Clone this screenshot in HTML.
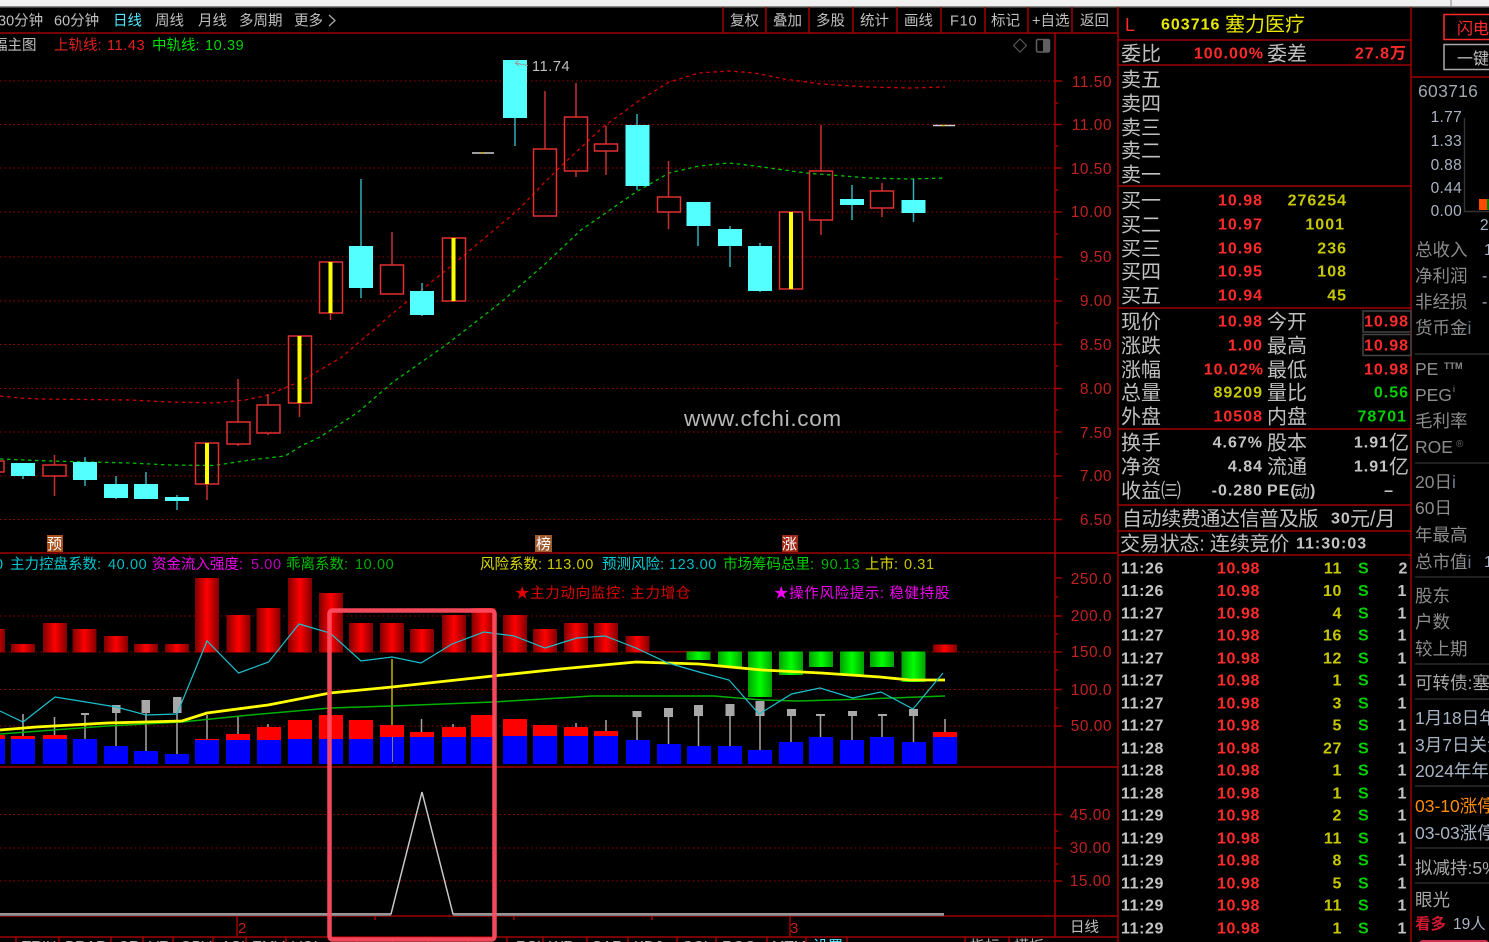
<!DOCTYPE html>
<html lang="zh">
<head>
<meta charset="utf-8">
<title>603716 塞力医疗</title>
<style>
html,body{margin:0;padding:0;background:#000;width:1489px;height:942px;overflow:hidden}
svg{display:block;font-family:"Liberation Sans","Noto Sans CJK SC",sans-serif;filter:blur(.3px)}
text{white-space:pre}
.t{font-size:14.5px;fill:#c0c0c0}
.n{font-size:14.5px;letter-spacing:.6px}
.ax{font-size:15.5px;fill:#c02222;text-anchor:end;letter-spacing:.5px}
.l{font-size:20px;fill:#c0c0c0;transform:translateY(.7px)}
.b{font-size:16px;font-weight:bold;letter-spacing:1px;transform:translateY(-.7px)}
.tk{letter-spacing:.6px}
.e{text-anchor:end}
.r{fill:#ff2a2a}.y{fill:#c8c800}.gr{fill:#00d000}.w{fill:#c4c4c4}
.s{font-size:17.5px;fill:#8c8c8c;transform:translateY(.8px)}
.v{fill:#a8b4c4}
.d{stroke:#a00000;stroke-width:1;stroke-dasharray:1.5 3;fill:none}
.ln{stroke:#a00000;stroke-width:1.5;fill:none}
.sep{stroke:#2c2c2c;stroke-width:1.5;fill:none}
</style>
</head>
<body>
<svg width="1489" height="942" viewBox="0 0 1489 942" xmlns="http://www.w3.org/2000/svg">
<defs>
<linearGradient id="rg" x1="0" x2="1" y1="0" y2="0"><stop offset="0" stop-color="#800000"/><stop offset=".5" stop-color="#ff0000"/><stop offset="1" stop-color="#800000"/></linearGradient>
<linearGradient id="gg" x1="0" x2="1" y1="0" y2="0"><stop offset="0" stop-color="#00a000"/><stop offset=".5" stop-color="#00ff00"/><stop offset="1" stop-color="#00a000"/></linearGradient>
</defs>
<rect width="1489" height="942" fill="#000"/>
<rect width="1489" height="6" fill="#f0f0f0"/>
<rect y="6" width="1489" height="1.5" fill="#8a8a8a"/>
<rect x="1450" width="2" height="6" fill="#bbb"/>

<!-- grids -->
<path class="d" d="M0 81H1055M0 124.500H1055M0 168H1055M0 212H1055M0 257H1055M0 301H1055M0 344.500H1055M0 388.500H1055M0 432H1055M0 476H1055M0 519.500H1055"/>
<path class="d" d="M0 616H1055M0 652H1055M0 689.500H1055M0 726H1055"/>
<path class="d" d="M0 814.500H1055M0 848H1055M0 881H1055"/>

<!-- structure lines -->
<path class="ln" d="M0 33H1118M0 553H1118M0 767H1118M0 916H1118M0 937H1118"/>
<path class="ln" d="M1055 33V937M1118 7V942M1411 7V942"/>
<path class="ln" stroke-width="1" d="M723 7V33M766 7V33M809 7V33M853 7V33M897 7V33M941 7V33M985 7V33M1028 7V33M1072 7V33"/>
<path class="ln" d="M1118 40H1411M1118 65H1411M1118 186H1411M1118 308H1411M1118 429H1411M1118 505H1411M1118 531H1411M1118 555H1411M1412 77H1489"/>
<path class="ln" d="M1055 81h7M1055 124.500h7M1055 168h7M1055 212h7M1055 257h7M1055 301h7M1055 344.500h7M1055 388.500h7M1055 432h7M1055 476h7M1055 519.500h7M1055 103h3M1055 146h3M1055 190h3M1055 234h3M1055 279h3M1055 323h3M1055 366h3M1055 410h3M1055 454h3M1055 498h3M1055 578h7M1055 616h7M1055 652h7M1055 689.500h7M1055 726h7M1055 597h3M1055 634h3M1055 670h3M1055 708h3M1055 814.500h7M1055 848h7M1055 881h7M1055 831h3M1055 864h3"/>
<path class="ln" stroke-width="1" d="M237 916V937M790 916V937M375 916v4M514 916v4M652 916v4M16 937v5M59 937v5M111 937v5M143 937v5M173 937v5M213 937v5M246 937v5M286 937v5M357 937v5M393 937v5M428 937v5M468 937v5M507 937v5M543 937v5M587 937v5M628 937v5M677 937v5M716 937v5M767 937v5M806 937v5M847 937v5M965 937v5M1009 937v5"/>

<!-- band lines -->
<polyline fill="none" stroke="#d00000" stroke-width="1.300" stroke-dasharray="3.500 3.500" points="0,396 20,398 40,399 130,400 170,402 215,403 245,400 265,396 285,388 303,380 320,370 342,357 357,344 371,332 393,313 403,305 450,267 518,210 544,183 560,167 603,127 640,100 669,82 699,73 729,71 755,73 784,79 821,84 869,87 910,88 945,87"/>
<polyline fill="none" stroke="#00c000" stroke-width="1.300" stroke-dasharray="3.500 3.500" points="0,459 50,461 130,463 170,465 214,465.500 250,460 285,456 303,445 320,437 357,413 393,382 446,345 500,303 544,265 581,230 636,192 669,173 699,166 729,163 755,166 806,173 869,178 910,179 945,178"/>

<!-- wicks -->
<path fill="none" stroke="#2fb0b8" stroke-width="1.500" d="M23 463V479M85 457V486M116 476V499M146 472V499M177 495V510M361 179V298M422 283V316M515 60V146M637 114V190M698 226V246M730 226V267M760 243V292M852 185V220M913.500 179V222"/>
<path fill="none" stroke="#c83030" stroke-width="1.500" d="M54.500 455V465M54.500 476V496M207 484V500M238 379V422M238 444V446M268 394V405M268 433V435M299.500 403V417M330.500 313V320M392 232V265M545 91V149M576 83V117M576 171V177M606 126V144M606 151V175M668.500 161V197M668.500 212V229M821 125V171M821 220V235M882 183V191M882 208V217"/>
<!-- red hollow candles -->
<g fill="none" stroke="#e03030" stroke-width="1.500">
<rect x="-5" y="461" width="9" height="11"/><rect x="43" y="465" width="23" height="11"/><rect x="195.500" y="443" width="23" height="41"/><rect x="227" y="422" width="23" height="22"/><rect x="257" y="405" width="23" height="28"/><rect x="288.500" y="336" width="23" height="67"/><rect x="319.500" y="262" width="23" height="51"/><rect x="380.500" y="265" width="23" height="29"/><rect x="442.500" y="238" width="23" height="63"/><rect x="533.500" y="149" width="23" height="67"/><rect x="564.500" y="117" width="23" height="54"/><rect x="594.500" y="144" width="23" height="7"/><rect x="657.500" y="197" width="23" height="15"/><rect x="779.500" y="212" width="23" height="77"/><rect x="809.500" y="171" width="23" height="49"/><rect x="870.500" y="191" width="23" height="17"/>
</g>
<g fill="#ffff00">
<rect x="205" y="443" width="4" height="41"/><rect x="297.500" y="336" width="4" height="67"/><rect x="328.500" y="262" width="4" height="51"/><rect x="451.500" y="238" width="4" height="63"/><rect x="789" y="212" width="4" height="77"/>
</g>
<!-- cyan candles -->
<g fill="#54ffff">
<rect x="11" y="463" width="24" height="13"/><rect x="73" y="462" width="24" height="18"/><rect x="104" y="484" width="24" height="14"/><rect x="134" y="484" width="24" height="15"/><rect x="165" y="497" width="24" height="4"/><rect x="349" y="246" width="24" height="42"/><rect x="410" y="291" width="24" height="24"/><rect x="503" y="60" width="24" height="58"/><rect x="625.500" y="125" width="24" height="61"/><rect x="686.500" y="202" width="24" height="24"/><rect x="718" y="229" width="24" height="17"/><rect x="748" y="246" width="24" height="45"/><rect x="840" y="199" width="24" height="6"/><rect x="901.500" y="200" width="24" height="13"/>
</g>
<!-- doji -->
<path stroke="#cfcfcf" stroke-width="1.500" d="M472 153H494M933 125.500H955"/>
<path stroke="#d0b000" stroke-width="1.500" d="M481 153h3M942 125.500h3"/>
<!-- high marker -->
<path fill="none" stroke="#9a9a9a" stroke-width="1" d="M528 65.500L515 63M515 63l4-2.500M515 63l4 3"/>
<text x="532" y="71" font-size="14.500" fill="#c0c0c0" letter-spacing=".6">11.74</text>

<!-- icons -->
<path fill="none" stroke="#555" stroke-width="1.200" d="M1020 39l6.500 6.500-6.500 6.500-6.500-6.500z"/>
<rect x="1036.500" y="39.500" width="13" height="12.500" rx="1.500" fill="none" stroke="#606060" stroke-width="1.500"/>
<rect x="1043" y="40" width="6" height="11.500" fill="#606060"/>

<!-- marker tags -->
<rect x="47" y="535" width="16" height="17" fill="#a84e18"/><text x="47" y="549" font-size="15" fill="#fff">预</text>
<rect x="535" y="535" width="17" height="17" fill="#a05a30"/><text x="536" y="549" font-size="15" fill="#fff">榜</text>
<rect x="782" y="535" width="16" height="17" fill="#a02818"/><text x="782" y="549" font-size="15" fill="#fff">涨</text>

<!-- watermark -->
<text x="684" y="426" font-size="22.500" fill="#b8b8b8" letter-spacing=".7">www.cfchi.com</text>

<!-- top bar text -->
<text class="t" x="-2" y="25.500">30分钟</text>
<text class="t" x="54" y="25.500">60分钟</text>
<text class="t" x="113" y="25.500" style="fill:#4fe8ff">日线</text>
<text class="t" x="155" y="25.500">周线</text>
<text class="t" x="198" y="25.500">月线</text>
<text class="t" x="239" y="25.500">多周期</text>
<text class="t" x="294" y="25.500">更多</text>
<path fill="none" stroke="#b0b0b0" stroke-width="1.200" d="M329 15l6 5.500-6 5.500"/>
<text class="t" x="730" y="25.500">复权</text>
<text class="t" x="773" y="25.500">叠加</text>
<text class="t" x="816" y="25.500">多股</text>
<text class="t" x="860" y="25.500">统计</text>
<text class="t" x="904" y="25.500">画线</text>
<text class="t" x="950" y="25.500" letter-spacing=".8">F10</text>
<text class="t" x="991" y="25.500">标记</text>
<text class="t" x="1032" y="25.500">+自选</text>
<text class="t" x="1080" y="25.500">返回</text>

<!-- legend main -->
<text class="t" x="-7" y="50">幅主图</text>
<text class="t" x="54" y="50" style="fill:#e02020">上轨线:</text><text class="n" x="107" y="50" fill="#e02020">11.43</text>
<text class="t" x="152" y="50" style="fill:#00e000">中轨线:</text><text class="n" x="205" y="50" fill="#00d000">10.39</text>

<!-- axis 1 -->
<text class="ax" x="1112" y="87">11.50</text><text class="ax" x="1112" y="130">11.00</text><text class="ax" x="1112" y="174">10.50</text><text class="ax" x="1112" y="217">10.00</text><text class="ax" x="1112" y="262">9.50</text><text class="ax" x="1112" y="306">9.00</text><text class="ax" x="1112" y="350">8.50</text><text class="ax" x="1112" y="394">8.00</text><text class="ax" x="1112" y="438">7.50</text><text class="ax" x="1112" y="481">7.00</text><text class="ax" x="1112" y="525">6.50</text>
<text class="ax" x="1112" y="584">250.0</text><text class="ax" x="1112" y="621">200.0</text><text class="ax" x="1112" y="657">150.0</text><text class="ax" x="1112" y="695">100.0</text><text class="ax" x="1112" y="731">50.00</text>
<text class="ax" x="1111" y="820">45.00</text><text class="ax" x="1111" y="853">30.00</text><text class="ax" x="1111" y="886">15.00</text>

<!-- panel2 legend -->
<text class="t" x="-5" y="569" style="fill:#00c8c8">0</text>
<text class="t" x="10" y="569" style="fill:#00c8d0">主力控盘系数:</text><text class="n" x="108" y="569" fill="#00b8c0">40.00</text>
<text class="t" x="152" y="569" style="fill:#f000f0">资金流入强度:</text><text class="n" x="251" y="569" fill="#c000c0">5.00</text>
<text class="t" x="286" y="569" style="fill:#00c000">乖离系数:</text><text class="n" x="355" y="569" fill="#00a800">10.00</text>
<text class="t" x="480" y="569" style="fill:#d8d800">风险系数:</text><text class="n" x="547" y="569" fill="#c8c800">113.00</text>
<text class="t" x="602" y="569" style="fill:#00d0d8">预测风险:</text><text class="n" x="669" y="569" fill="#00b8c0">123.00</text>
<text class="t" x="723" y="569" style="fill:#00d000">市场筹码总里:</text><text class="n" x="821" y="569" fill="#00b000">90.13</text>
<text class="t" x="865" y="569" style="fill:#d8d800">上市:</text><text class="n" x="904" y="569" fill="#c8c800">0.31</text>
<text class="t" x="515" y="598" style="fill:#e00000" letter-spacing=".65">★主力动向监控: 主力增仓</text>
<text class="t" x="774" y="598" style="fill:#f000f0" letter-spacing=".65">★操作风险提示: 稳健持股</text>

<!-- red momentum bars -->
<g fill="url(#rg)">
<rect x="-19" y="629" width="24" height="23.500"/><rect x="11" y="644" width="24" height="8.500"/><rect x="43" y="623" width="24" height="29.500"/><rect x="72.500" y="629" width="24" height="23.500"/><rect x="104" y="636" width="24" height="16.500"/><rect x="134" y="644" width="24" height="8.500"/><rect x="165" y="644" width="24" height="8.500"/><rect x="195" y="578" width="24" height="74.500"/><rect x="226.500" y="615" width="24" height="37.500"/><rect x="256.500" y="608" width="24" height="44.500"/><rect x="288" y="578" width="24" height="74.500"/><rect x="319" y="593" width="24" height="59.500"/><rect x="349" y="623" width="24" height="29.500"/><rect x="380" y="623" width="24" height="29.500"/><rect x="410" y="629" width="24" height="23.500"/><rect x="442" y="615" width="24" height="37.500"/><rect x="471.500" y="608" width="24" height="44.500"/><rect x="503" y="615" width="24" height="37.500"/><rect x="533" y="629" width="24" height="23.500"/><rect x="564" y="623" width="24" height="29.500"/><rect x="594" y="623" width="24" height="29.500"/><rect x="625.500" y="636" width="24" height="16.500"/><rect x="933" y="644.500" width="24" height="8"/>
</g>
<rect x="650" y="651" width="48" height="1.500" fill="#900"/>
<g fill="url(#gg)">
<rect x="686.500" y="651.500" width="24" height="8.500"/><rect x="718" y="651.500" width="24" height="15.500"/><rect x="748" y="651.500" width="24" height="45.500"/><rect x="779" y="651.500" width="24" height="23.500"/><rect x="809" y="651.500" width="24" height="15.500"/><rect x="840" y="651.500" width="24" height="23.500"/><rect x="870" y="651.500" width="24" height="15.500"/><rect x="901.500" y="651.500" width="24" height="30.500"/>
</g>

<!-- gray wicks and caps -->
<path fill="none" stroke="#a8a8a8" stroke-width="1.500" d="M23 714V736M54.500 717V735M85 714V739M116 705V746M146 700V751M177 697V754M207 715V739M238 717V734M268 724V727M421.500 719V732M453 724V727M576 723V727M606 720V731M637 711V740M668.500 708V744M698.500 705V746M730 704V746M760 701V750M791 709V742M820.500 714V737M852 711V740M882 714V737M913.500 709V742M945 719V732M392 725V762"/>
<path stroke="#c8b000" stroke-width="1.500" d="M392 659V725"/>
<g fill="#a8a8a8">
<rect x="81" y="713" width="8" height="2"/><rect x="112" y="705" width="8.500" height="8"/><rect x="141.500" y="700" width="8.500" height="13"/><rect x="173" y="697" width="8.500" height="16"/><rect x="632.500" y="711" width="9" height="6"/><rect x="664" y="708" width="9" height="9"/><rect x="694" y="705" width="9" height="11"/><rect x="725.500" y="704" width="9" height="12"/><rect x="755.500" y="701" width="9" height="15"/><rect x="787" y="709" width="9" height="7"/><rect x="816" y="714" width="9" height="2"/><rect x="848" y="711" width="9" height="5"/><rect x="878" y="714" width="9" height="2"/><rect x="909" y="709" width="9" height="7"/>
</g>
<!-- blue volume -->
<path fill="#0000ff" d="M-19 739h24v25h-24zM11 739h24v25h-24zM43 739h24v25h-24zM73 739h24v25h-24zM104 746h24v18h-24zM134 751h24v13h-24zM165 754h24v10h-24zM195 740h24v24h-24zM226 740h24v24h-24zM257 740h24v24h-24zM288 739h24v25h-24zM319 739h24v25h-24zM349 739h24v25h-24zM380 737h12v27h-12zM393 737h11v27h-11zM410 737h24v27h-24zM442 737h24v27h-24zM471 737h24v27h-24zM503 736h24v28h-24zM533 736h24v28h-24zM564 736h24v28h-24zM594 736h24v28h-24zM626 740h24v24h-24zM657 744h24v20h-24zM687 746h24v18h-24zM718 746h24v18h-24zM748 750h24v14h-24zM779 742h24v22h-24zM809 737h24v27h-24zM840 740h24v24h-24zM870 737h24v27h-24zM902 742h24v22h-24zM933 737h24v27h-24z"/>
<path fill="#ff0000" d="M-19 735h24v4h-24zM11 736h24v3h-24zM43 735h24v4h-24zM195 739h24v1h-24zM226 734h24v6h-24zM257 727h24v13h-24zM288 720h24v19h-24zM319 715h24v24h-24zM349 720h24v19h-24zM380 725h24v12h-24zM410 732h24v5h-24zM442 727h24v10h-24zM471 715h24v22h-24zM503 719h24v17h-24zM533 725h24v11h-24zM564 727h24v9h-24zM594 731h24v5h-24zM933 732h24v5h-24z"/>

<!-- indicator lines -->
<polyline fill="none" stroke="#00b000" stroke-width="1.500" points="0,734 107,726 182,722 250,715 330,708 392,706 493,702 560,698 592,696 714,696 762,700 799,701 865,699 945,696"/>
<polyline fill="none" stroke="#ffff00" stroke-width="2.800" points="0,730 36,727 107,723 182,721 207,713 268,705 330,693 392,687 493,676 560,669 636,662 699,664 762,670 821,673 880,677 910,680 945,680"/>
<polyline fill="none" stroke="#1cc0cc" stroke-width="1.200" points="0,711 23,722 55,697 86,702 116,707 146,715 177,714 207,641 238.600,673 268.600,662 299,624 330,633 361,661 392,657 421,663 452,644 484,632 514,636 545,648 577,638 605,636 636,648 668,663 699,672 729,680 759,714 791.600,694 820,688 852.600,698 881,692 913,709 943,673"/>

<!-- panel 3 -->
<path fill="none" stroke="#c8c8c8" stroke-width="1.500" d="M0 914H391L422 792 453 914H944"/>
<path fill="none" stroke="#777" stroke-width="1" d="M0 915.500H391M453 915.500H944"/>
<text x="238" y="933" font-size="15" fill="#c02020">2</text>
<text x="790" y="933" font-size="15" fill="#c02020">3</text>
<text class="t" x="1070" y="932">日线</text>

<!-- bottom cut-off tabs -->
<g font-size="15" fill="#b0b0b0">
<text x="22" y="951">TRIX</text><text x="65" y="951">BRAR</text><text x="118" y="951">CR</text><text x="149" y="951">VR</text><text x="180" y="951">OBV</text><text x="221" y="951">ASI</text><text x="252" y="951">EMV</text><text x="292" y="951">VOL</text><text x="516" y="951">RSI</text><text x="549" y="951">WR</text><text x="592" y="951">SAR</text><text x="634" y="951">KDJ</text><text x="682" y="951">CCI</text><text x="722" y="951">ROC</text><text x="772" y="951">MTM</text><text x="813" y="951" fill="#4fe8ff">设置</text><text x="970" y="951">指标</text><text x="1014" y="951">模板</text>
</g>

<!-- pink highlight -->
<rect x="329.500" y="610.500" width="165" height="329" rx="3" fill="none" stroke="#ff4c60" stroke-width="4.500" opacity=".95"/>

<!-- quote panel -->
<text x="1125" y="31" font-size="18" fill="#ff2a2a">L</text>
<text class="b" x="1161" y="30" fill="#e8e800" letter-spacing="1.100">603716</text>
<text x="1225" y="31" font-size="20" fill="#e8e800">塞力医疗</text>
<text class="l" x="1121" y="60">委比</text><text class="b e r" x="1264" y="59">100.00%</text><text class="l" x="1267" y="60">委差</text><text class="b e r" x="1407" y="59">27.8万</text>
<text class="l" x="1121" y="86">卖五</text><text class="l" x="1121" y="110">卖四</text><text class="l" x="1121" y="134">卖三</text><text class="l" x="1121" y="157">卖二</text><text class="l" x="1121" y="181">卖一</text>
<text class="l" x="1121" y="207">买一</text><text class="b e r" x="1263" y="206">10.98</text><text class="b e y" x="1347" y="206">276254</text>
<text class="l" x="1121" y="231">买二</text><text class="b e r" x="1263" y="230">10.97</text><text class="b e y" x="1345" y="230">1001</text>
<text class="l" x="1121" y="255">买三</text><text class="b e r" x="1263" y="254">10.96</text><text class="b e y" x="1347" y="254">236</text>
<text class="l" x="1121" y="278">买四</text><text class="b e r" x="1263" y="277">10.95</text><text class="b e y" x="1347" y="277">108</text>
<text class="l" x="1121" y="302">买五</text><text class="b e r" x="1263" y="301">10.94</text><text class="b e y" x="1347" y="301">45</text>

<rect x="1363" y="311" width="48" height="21" fill="none" stroke="#444" stroke-width="1.500"/>
<rect x="1363" y="334.500" width="48" height="21" fill="none" stroke="#444" stroke-width="1.500"/>
<text class="l" x="1121" y="328">现价</text><text class="b e r" x="1263" y="327">10.98</text><text class="l" x="1267" y="328">今开</text><text class="b e r" x="1409" y="327">10.98</text>
<text class="l" x="1121" y="352">涨跌</text><text class="b e r" x="1263" y="351">1.00</text><text class="l" x="1267" y="352">最高</text><text class="b e r" x="1409" y="351">10.98</text>
<text class="l" x="1121" y="376">涨幅</text><text class="b e r" x="1264" y="375">10.02%</text><text class="l" x="1267" y="376">最低</text><text class="b e r" x="1409" y="375">10.98</text>
<text class="l" x="1121" y="399">总量</text><text class="b e y" x="1263" y="398">89209</text><text class="l" x="1267" y="399">量比</text><text class="b e gr" x="1409" y="398">0.56</text>
<text class="l" x="1121" y="423">外盘</text><text class="b e r" x="1263" y="422">10508</text><text class="l" x="1267" y="423">内盘</text><text class="b e gr" x="1407" y="422">78701</text>

<text class="l" x="1121" y="449">换手</text><text class="b e w" x="1263" y="448">4.67%</text><text class="l" x="1267" y="449">股本</text><text class="b e w" x="1389" y="448">1.91</text><text class="l" x="1389" y="449">亿</text>
<text class="l" x="1121" y="473">净资</text><text class="b e w" x="1263" y="472">4.84</text><text class="l" x="1267" y="473">流通</text><text class="b e w" x="1389" y="472">1.91</text><text class="l" x="1389" y="473">亿</text>
<text class="l" x="1121" y="497">收益㈢</text><text class="b e w" x="1263" y="496">-0.280</text><text class="b w" x="1267" y="496">PE(</text><text x="1294" y="497" font-size="16" fill="#c0c0c0">动</text><text class="b w" x="1310" y="496">)</text><text class="b e w" x="1394" y="496">–</text>
<text class="l" x="1122" y="525" letter-spacing="-.4">自动续费通达信普及版</text><text class="b w" x="1331" y="524">30</text><text class="l" x="1350" y="525">元/月</text>
<text class="l" x="1120" y="550" letter-spacing="-.2">交易状态: 连续竞价</text><text class="b w" x="1296" y="549">11:30:03</text>

<!-- ticks -->
<g class="b tk">
<text class="w" x="1121" y="574">11:26</text><text class="e r" x="1260" y="574">10.98</text><text class="e y" x="1342" y="574">11</text><text class="gr" x="1358" y="574">S</text><text class="e w" x="1408" y="574">2</text>
<text class="w" x="1121" y="596.500">11:26</text><text class="e r" x="1260" y="596.500">10.98</text><text class="e y" x="1342" y="596.500">10</text><text class="gr" x="1358" y="596.500">S</text><text class="e w" x="1407" y="596.500">1</text>
<text class="w" x="1121" y="619">11:27</text><text class="e r" x="1260" y="619">10.98</text><text class="e y" x="1342" y="619">4</text><text class="gr" x="1358" y="619">S</text><text class="e w" x="1407" y="619">1</text>
<text class="w" x="1121" y="641">11:27</text><text class="e r" x="1260" y="641">10.98</text><text class="e y" x="1342" y="641">16</text><text class="gr" x="1358" y="641">S</text><text class="e w" x="1407" y="641">1</text>
<text class="w" x="1121" y="664">11:27</text><text class="e r" x="1260" y="664">10.98</text><text class="e y" x="1342" y="664">12</text><text class="gr" x="1358" y="664">S</text><text class="e w" x="1407" y="664">1</text>
<text class="w" x="1121" y="686">11:27</text><text class="e r" x="1260" y="686">10.98</text><text class="e y" x="1342" y="686">1</text><text class="gr" x="1358" y="686">S</text><text class="e w" x="1407" y="686">1</text>
<text class="w" x="1121" y="709">11:27</text><text class="e r" x="1260" y="709">10.98</text><text class="e y" x="1342" y="709">3</text><text class="gr" x="1358" y="709">S</text><text class="e w" x="1407" y="709">1</text>
<text class="w" x="1121" y="731">11:27</text><text class="e r" x="1260" y="731">10.98</text><text class="e y" x="1342" y="731">5</text><text class="gr" x="1358" y="731">S</text><text class="e w" x="1407" y="731">1</text>
<text class="w" x="1121" y="754">11:28</text><text class="e r" x="1260" y="754">10.98</text><text class="e y" x="1342" y="754">27</text><text class="gr" x="1358" y="754">S</text><text class="e w" x="1407" y="754">1</text>
<text class="w" x="1121" y="776">11:28</text><text class="e r" x="1260" y="776">10.98</text><text class="e y" x="1342" y="776">1</text><text class="gr" x="1358" y="776">S</text><text class="e w" x="1407" y="776">1</text>
<text class="w" x="1121" y="799">11:28</text><text class="e r" x="1260" y="799">10.98</text><text class="e y" x="1342" y="799">1</text><text class="gr" x="1358" y="799">S</text><text class="e w" x="1407" y="799">1</text>
<text class="w" x="1121" y="821">11:29</text><text class="e r" x="1260" y="821">10.98</text><text class="e y" x="1342" y="821">2</text><text class="gr" x="1358" y="821">S</text><text class="e w" x="1407" y="821">1</text>
<text class="w" x="1121" y="844">11:29</text><text class="e r" x="1260" y="844">10.98</text><text class="e y" x="1342" y="844">11</text><text class="gr" x="1358" y="844">S</text><text class="e w" x="1407" y="844">1</text>
<text class="w" x="1121" y="866">11:29</text><text class="e r" x="1260" y="866">10.98</text><text class="e y" x="1342" y="866">8</text><text class="gr" x="1358" y="866">S</text><text class="e w" x="1407" y="866">1</text>
<text class="w" x="1121" y="889">11:29</text><text class="e r" x="1260" y="889">10.98</text><text class="e y" x="1342" y="889">5</text><text class="gr" x="1358" y="889">S</text><text class="e w" x="1407" y="889">1</text>
<text class="w" x="1121" y="911">11:29</text><text class="e r" x="1260" y="911">10.98</text><text class="e y" x="1342" y="911">11</text><text class="gr" x="1358" y="911">S</text><text class="e w" x="1407" y="911">1</text>
<text class="w" x="1121" y="934">11:29</text><text class="e r" x="1260" y="934">10.98</text><text class="e y" x="1342" y="934">1</text><text class="gr" x="1358" y="934">S</text><text class="e w" x="1407" y="934">1</text>
</g>

<!-- far right column -->
<rect x="1444" y="14.500" width="60" height="25" fill="none" stroke="#ff2a2a" stroke-width="1.500"/>
<text x="1457" y="34" font-size="16" fill="#ff2a2a">闪电买</text>
<rect x="1444" y="44.500" width="60" height="25" fill="none" stroke="#a8a8a8" stroke-width="1.500"/>
<text x="1457" y="64" font-size="16" fill="#c0c0c0">一键卖</text>
<text x="1418" y="97" font-size="17.500" fill="#a0a8b0" letter-spacing=".3">603716</text>
<g font-size="15.500" fill="#a8b4c4" text-anchor="end" letter-spacing=".3">
<text x="1462" y="122">1.77</text><text x="1462" y="146">1.33</text><text x="1462" y="170">0.88</text><text x="1462" y="193">0.44</text><text x="1462" y="216">0.00</text>
</g>
<path fill="none" stroke="#333" stroke-width="1.500" d="M1464.500 118V211.500H1489"/>
<rect x="1479" y="199" width="8" height="11" fill="#ff4a00"/><rect x="1487" y="199" width="2" height="11" fill="#008000"/>
<text x="1480" y="230" font-size="15.500" fill="#a8b4c4">2</text>

<text class="s" x="1415" y="255">总收入</text><text x="1484" y="255" font-size="16" fill="#a8b4c4">1</text>
<text class="s" x="1415" y="281">净利润</text><text x="1482" y="281" font-size="16" fill="#a8b4c4">-</text>
<text class="s" x="1415" y="307">非经损</text><text x="1482" y="307" font-size="16" fill="#a8b4c4">-</text>
<text class="s" x="1415" y="333">货币金<tspan fill="#6c7c90">i</tspan></text>
<path class="sep" d="M1415 354H1489M1415 463H1489M1415 577H1489M1415 664H1489M1415 699H1489M1415 786H1489M1415 848H1489M1415 883H1489"/>
<text class="s" x="1415" y="374">PE</text><text x="1444" y="369" font-size="9" font-weight="bold" fill="#8c8c8c">TTM</text>
<text class="s" x="1415" y="400">PEG</text><text x="1453" y="392" font-size="9" fill="#8c8c8c">i</text>
<text class="s" x="1415" y="426">毛利率</text>
<text class="s" x="1415" y="452">ROE</text><text x="1456" y="447" font-size="10" fill="#666">®</text>
<text class="s" x="1415" y="487">20日<tspan fill="#6c7c90">i</tspan></text>
<text class="s" x="1415" y="513">60日</text>
<text class="s" x="1415" y="540">年最高</text>
<text class="s" x="1415" y="567">总市值<tspan fill="#6c7c90">i</tspan></text><text x="1484" y="567" font-size="16" fill="#a8b4c4">1</text>
<text class="s" x="1415" y="601">股东</text>
<text class="s" x="1415" y="627">户数</text>
<text class="s" x="1415" y="654">较上期</text>
<text class="s" x="1415" y="688" style="fill:#a8a8a8">可转债:塞力转债</text>
<text class="s" x="1415" y="723" style="fill:#a8b4c4">1月18日年报</text>
<text class="s" x="1415" y="750" style="fill:#a8b4c4">3月7日关注</text>
<text class="s" x="1415" y="776" style="fill:#a8b4c4">2024年年报</text>
<text class="s" x="1415" y="811" style="fill:#ff8c00">03-10涨停</text>
<text class="s" x="1415" y="838" style="fill:#a8b4c4">03-03涨停</text>
<text class="s" x="1415" y="873" style="fill:#a8a8a8">拟减持:5%</text>
<text class="s" x="1415" y="905" style="fill:#a8a8a8">眼光</text>
<text x="1415" y="929" font-size="15.500" fill="#d01830" font-weight="bold">看多</text><text x="1453" y="929" font-size="15.500" fill="#a8b4c4">19人</text>
<rect x="1419" y="940" width="70" height="8" rx="4" fill="#d03050"/>
</svg>
</body>
</html>
